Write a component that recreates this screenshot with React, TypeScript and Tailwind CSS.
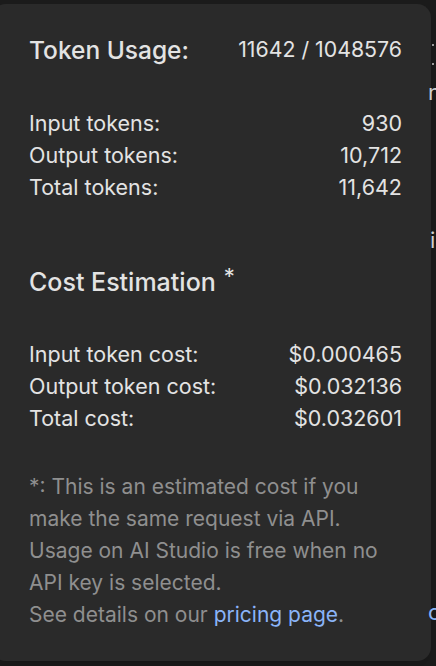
import React from 'react';

const usageRows = [
    { label: 'Input tokens:', value: '930' },
    { label: 'Output tokens:', value: '10,712' },
    { label: 'Total tokens:', value: '11,642' },
];

const costRows = [
    { label: 'Input token cost:', value: '$0.000465' },
    { label: 'Output token cost:', value: '$0.032136' },
    { label: 'Total cost:', value: '$0.032601' },
];

const Row: React.FC<{ label: string; value: string }> = ({ label, value }) => (
    <div className="flex items-center justify-between h-8">
        <span>{label}</span>
        <span>{value}</span>
    </div>
);

export default function App() {
    return (
        <div
            className="flex h-[666px] w-[436px] overflow-hidden bg-[#1b1b1b] text-[#e3e3e3]"
            style={{ fontFamily: 'Inter, "Noto Sans", sans-serif' }}
        >
            {/* Popover */}
            <div className="-ml-[8px] mt-[4px] h-[657px] w-[439px] shrink-0 rounded-[14px] bg-[#2a2a2a] pl-[37px] pr-[29px] pt-[26px] shadow-lg">
                <div className="flex items-center justify-between h-[40px]">
                    <h2 className="text-[24.5px] font-medium">Token Usage:</h2>
                    <span className="text-[21.3px]">11642 / 1048576</span>
                </div>

                <div className="mt-[37px] text-[21.5px]">
                    {usageRows.map(r => (
                        <Row key={r.label} label={r.label} value={r.value} />
                    ))}
                </div>

                <h2 className="mt-[60px] h-[40px] flex items-center text-[25px] font-medium">
                    Cost Estimation
                    <span className="ml-[8px] self-start mt-[2px] text-[22px] leading-none font-normal">*</span>
                </h2>

                <div className="mt-[35px] text-[21.5px]">
                    {costRows.map(r => (
                        <Row key={r.label} label={r.label} value={r.value} />
                    ))}
                </div>

                <p className="mt-[37px] text-[21px] leading-8 text-[#8f8f8f]">
                    *: This is an estimated cost if you make the same request via API. Usage on AI Studio is free when no API key is selected.
                    <br />
                    See details on our <a className="text-[#8ab4f8]">pricing page</a>.
                </p>
            </div>

            {/* page content peeking out behind the popover */}
            <div className="flex flex-col pl-[1px] text-[22px] leading-8 text-[#d0d0d0]">
                <div className="mt-[44px] h-[2px] w-[2px] bg-[#9a9a9a]" />
                <div className="mt-[17px] h-[2px] w-[2px] bg-[#9a9a9a]" />
                <span className="-ml-[4px] mt-[11px]">n</span>
                <span className="-ml-[2px] mt-[116px]">i</span>
                <span className="-ml-[4px] mt-[340px] text-[#8ab4f8]">c</span>
            </div>
        </div>
    );
}
